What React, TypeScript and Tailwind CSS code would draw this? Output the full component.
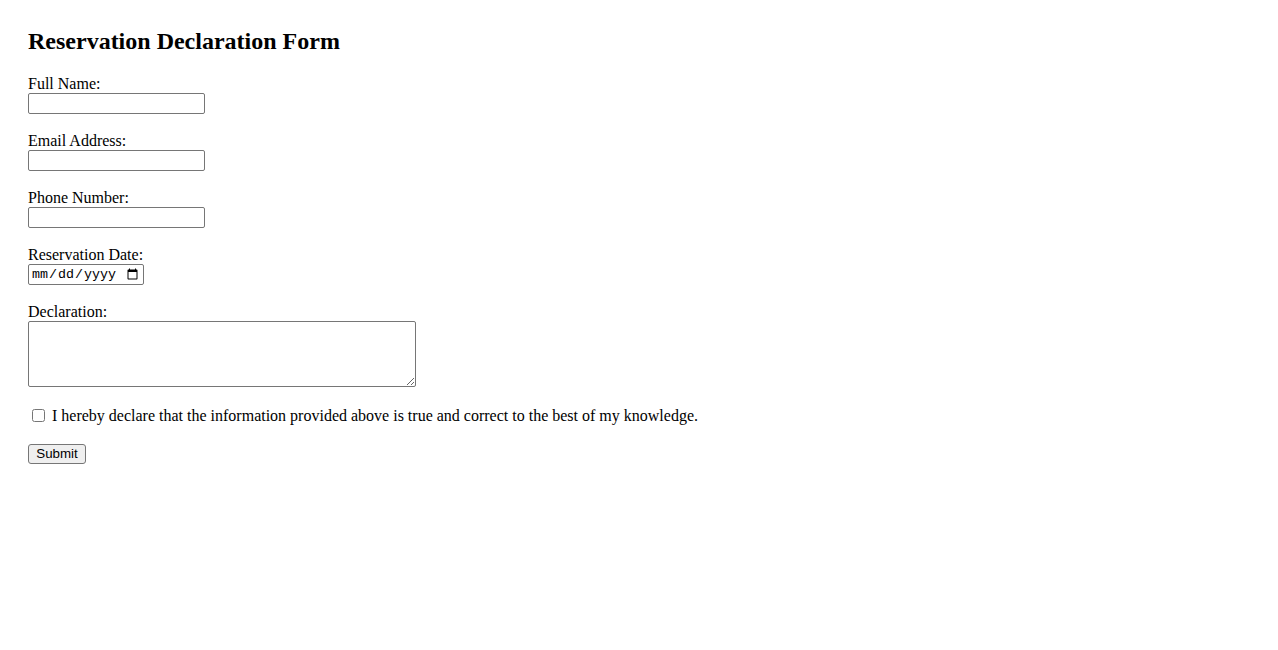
import React from "react";

export default function App() {
  const serif = { fontFamily: '"Liberation Serif", "Times New Roman", serif' };
  const inputCls =
    "block w-[177px] h-[21px] border border-[#767676] rounded-[2px] bg-white px-[2px] py-[1px] text-[13.33px] font-['Liberation_Sans',Arial,sans-serif] text-black";
  return (
    <div className="min-h-[650px] w-full bg-white text-black px-[28px] pt-[27px] font-['Liberation_Serif','Times_New_Roman',serif]" style={serif}>
      <h2 className="text-[24px] leading-[28px] font-bold">Reservation Declaration Form</h2>
      <form className="mt-[20px] flex flex-col items-start" onSubmit={(e) => e.preventDefault()}>
        <label className="block text-[16px] leading-[18px]" htmlFor="name">Full Name:</label>
        <input id="name" type="text" className={inputCls} />
        <label className="mt-[18px] block text-[16px] leading-[18px]" htmlFor="email">Email Address:</label>
        <input id="email" type="email" className={inputCls} />
        <label className="mt-[18px] block text-[16px] leading-[18px]" htmlFor="phone">Phone Number:</label>
        <input id="phone" type="tel" className={inputCls} />
        <label className="mt-[18px] block text-[16px] leading-[18px]" htmlFor="date">Reservation Date:</label>
        <input
          id="date"
          type="date"
          className="block w-[116px] h-[21px] border border-[#767676] rounded-[2px] bg-white px-[2px] py-0 text-[13.33px] font-['Liberation_Mono',monospace] text-black"
        />
        <label className="mt-[18px] block text-[16px] leading-[18px]" htmlFor="decl">Declaration:</label>
        <textarea
          id="decl"
          className="block w-[388px] h-[66px] border border-[#767676] rounded-[2px] bg-white p-[2px] text-[13.33px] font-['Liberation_Mono',monospace]"
        />
        <div className="mt-[20px] flex items-center text-[16px] leading-[18px]">
          <input id="agree" type="checkbox" className="ml-[4px] mr-[3px] w-[13px] h-[13px] -translate-y-[1px]" />
          <label htmlFor="agree" className="ml-[4px]">
            I hereby declare that the information provided above is true and correct to the best of my knowledge.
          </label>
        </div>
        <button
          type="submit"
          className="mt-[19px] h-[20px] w-[58px] border border-[#767676] rounded-[3px] bg-[#efefef] text-[13.33px] leading-[16px] font-['Liberation_Sans',Arial,sans-serif] text-black"
        >
          Submit
        </button>
      </form>
    </div>
  );
}
